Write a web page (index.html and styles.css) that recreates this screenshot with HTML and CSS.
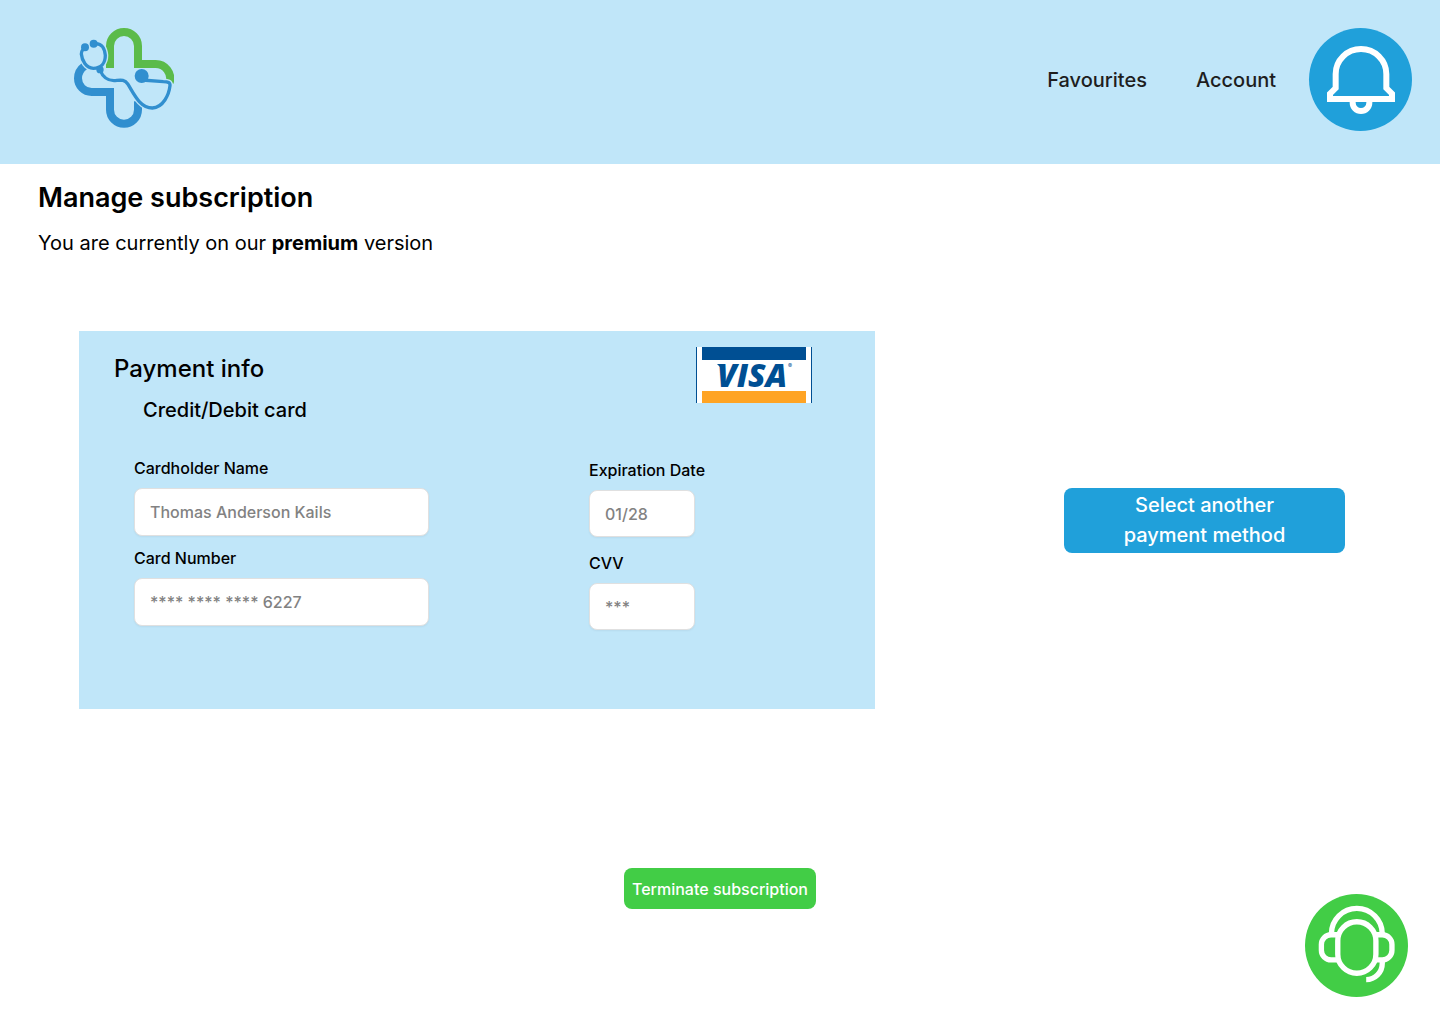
FILE: index.html
```html
<!DOCTYPE html>
<html lang="en">
<head>
<meta charset="utf-8">
<meta name="viewport" content="width=device-width, initial-scale=1">
<title>Manage subscription</title>
<link rel="stylesheet" href="styles.css">
</head>
<body>
<header class="topbar">
  <a class="logo" href="#" aria-label="Home">
    <svg viewBox="30 30 300 300" width="100" height="100" fill="none" aria-hidden="true">
      <path class="logo-green" d="M138 150V84A42 42 0 0 1 222 84V138H274A44 44 0 0 1 317 194"/>
      <path class="logo-blue" d="M62 144Q42 158 42 181A41 41 0 0 0 83 222H138V275A42 42 0 0 0 222 275V250"/>
      <path class="logo-halo" d="M66 90Q52 94 52 108C54 128 66 150 88 151C112 151 124 134 124 112C122 94 116 74 90 77M108 156C116 176 130 188 150 188C168 187 180 182 192 199C210 228 228 270 265 270C298 268 315 230 318 203C319 193 312 191 298 191L234 186"/>
      <path class="logo-tube" d="M66 90Q52 94 52 108C54 128 66 150 88 151C112 151 124 134 124 112C122 94 116 74 90 77M108 156C116 176 130 188 150 188C168 187 180 182 192 199C210 228 228 270 265 270C298 268 315 230 318 203C319 193 312 191 298 191L234 186"/>
      <g class="logo-dots">
        <circle cx="63" cy="88" r="12"/>
        <circle cx="89" cy="77" r="12"/>
        <circle cx="108" cy="155" r="11"/>
        <circle cx="233" cy="174" r="21"/>
      </g>
    </svg>
  </a>
  <nav class="nav">
    <a class="nav-link" href="#">Favourites</a>
    <a class="nav-link" href="#">Account</a>
  </nav>
  <button class="round-button blue" type="button" aria-label="Notifications">
    <svg viewBox="27 24 309 309" width="103" height="103" fill="none" stroke="#fff" stroke-width="18" aria-hidden="true">
      <path d="M90 237V221L107 204V162A76 75 0 0 1 259 162V204L276 221V237Z"/>
      <path d="M158 240V248A25 25 0 0 0 208 248V240"/>
    </svg>
  </button>
</header>

<main class="page">
  <h1 class="title">Manage subscription</h1>
  <p class="plan">You are currently on our <strong>premium</strong> version</p>

  <div class="payment-row">
    <section class="card">
      <div class="card-head">
        <div class="card-titles">
          <h2 class="card-title">Payment info</h2>
          <p class="card-type">Credit/Debit card</p>
        </div>
        <svg class="visa" viewBox="0 0 116 56" width="116" height="56" role="img" aria-label="Visa">
          <rect width="116" height="56" fill="#fff"/>
          <path fill="#004f93" d="M0 0h1v56H0zM115 0h1v56h-1zM6 0h104v13H6z"/>
          <path fill="#ffa424" d="M6 44h104v12H6z"/>
          <path fill="#004f93" d="M21 17h6v3h-3z"/>
          <text class="visa-word" x="21" y="40">VISA</text>
          <text class="visa-mark" x="92" y="21">®</text>
        </svg>
      </div>
      <form class="fields">
        <div class="column wide">
          <div class="field">
            <label for="holder">Cardholder Name</label>
            <input id="holder" type="text" value="Thomas Anderson Kails" readonly>
          </div>
          <div class="field">
            <label for="number">Card Number</label>
            <input id="number" type="text" value="**** **** **** 6227" readonly>
          </div>
        </div>
        <div class="column narrow">
          <div class="field">
            <label for="expiry">Expiration Date</label>
            <input id="expiry" type="text" value="01/28" readonly>
          </div>
          <div class="field">
            <label for="cvv">CVV</label>
            <input id="cvv" type="text" value="***" readonly>
          </div>
        </div>
      </form>
    </section>
    <button class="button select" type="button">Select another<br>payment method</button>
  </div>

  <button class="button terminate" type="button">Terminate subscription</button>
</main>

<button class="round-button green help" type="button" aria-label="Support">
  <svg viewBox="27 27 308 308" width="103" height="103" fill="none" stroke="#fff" stroke-width="16" aria-hidden="true">
    <rect x="125" y="110" width="114" height="154" rx="57"/>
    <path d="M106 150V146A76 76 0 0 1 258 146V150"/>
    <path d="M124 149H105A29 29 0 0 0 76 178V195A29 29 0 0 0 105 224H124"/>
    <path d="M239 149H258A29 29 0 0 1 287 178V195A29 29 0 0 1 258 224H239"/>
    <path d="M258 225V235A48 48 0 0 1 210 283"/>
  </svg>
</button>
</body>
</html>
```
FILE: styles.css
```css
* {
  box-sizing: border-box;
}

body {
  margin: 0;
  background: #fff;
  color: #000;
  font-family: Inter, "Liberation Sans", sans-serif;
  font-size: 16px;
  line-height: 24px;
}

h1,
h2,
p {
  margin: 0;
}

button {
  border: 0;
  padding: 0;
  font: inherit;
  cursor: pointer;
}

svg {
  display: block;
}

.topbar {
  display: flex;
  align-items: flex-start;
  padding: 28px 28px 33px 74px;
  background: #c0e6f9;
}

.logo {
  margin-right: auto;
}

.logo-green {
  stroke: #5bbb4a;
  stroke-width: 24;
}

.logo-blue {
  stroke: #318fcf;
  stroke-width: 24;
}

.logo-halo {
  stroke: #c0e6f9;
  stroke-width: 18;
}

.logo-tube {
  stroke: #318fcf;
  stroke-width: 10;
}

.logo-dots {
  fill: #318fcf;
}

.nav {
  display: flex;
  align-self: center;
  gap: 49px;
  margin-right: 33px;
}

.nav-link {
  color: #1e1e1e;
  font-size: 20px;
  font-weight: 500;
  line-height: 30px;
  text-decoration: none;
}

.round-button {
  width: 103px;
  height: 103px;
  border-radius: 50%;
}

.blue {
  background: #20a0da;
}

.green {
  background: #42cd46;
}

.page {
  padding-top: 13px;
}

.title {
  padding: 0 38px;
  font-size: 27px;
  font-weight: 600;
  line-height: 42px;
}

.plan {
  margin-top: 9px;
  padding: 0 38px;
  font-size: 20px;
  line-height: 30px;
}

.payment-row {
  display: flex;
  align-items: center;
  justify-content: space-between;
  gap: 32px;
  margin-top: 73px;
  padding: 0 95px 0 79px;
}

.card {
  flex: 0 1 796px;
  padding: 16px 63px 79px 35px;
  background: #c0e6f9;
}

.card-head {
  display: flex;
  align-items: flex-start;
  justify-content: space-between;
}

.card-titles {
  padding-top: 4px;
}

.card-title {
  font-size: 24px;
  font-weight: 500;
  line-height: 36px;
}

.card-type {
  margin-top: 8px;
  padding-left: 29px;
  font-size: 20px;
  font-weight: 500;
  line-height: 30px;
}

.visa-word {
  fill: #004f93;
  font: italic 800 32px "Open Sans", sans-serif;
}

.visa-mark {
  fill: #004f93;
  font: 6px Inter, sans-serif;
}

.fields {
  display: flex;
  gap: 160px;
  margin-top: 31px;
  padding-left: 20px;
  font-weight: 500;
}

.column {
  display: flex;
  flex-direction: column;
  gap: 10px;
}

.wide {
  width: 295px;
}

.narrow {
  gap: 14px;
  padding-top: 2px;
}

.field {
  display: flex;
  flex-direction: column;
  gap: 8px;
}

.field input {
  height: 48px;
  padding: 0 15px;
  border: 1px solid #e0e0e0;
  border-radius: 8px;
  background: #fff;
  box-shadow: 0 1px 2px rgba(0, 0, 0, 0.05);
  color: #828282;
  font: inherit;
}

.narrow input {
  width: 106px;
  height: 47px;
}

.button {
  border-radius: 8px;
  color: #fff;
  font-weight: 500;
}

.select {
  flex: 0 0 281px;
  min-height: 65px;
  background: #20a0da;
  font-size: 20px;
  line-height: 30px;
}

.terminate {
  display: block;
  min-height: 41px;
  margin: 159px auto 0;
  padding: 0 8px;
  background: #42cd46;
}

.help {
  position: fixed;
  right: 32px;
  bottom: 27px;
}
```
